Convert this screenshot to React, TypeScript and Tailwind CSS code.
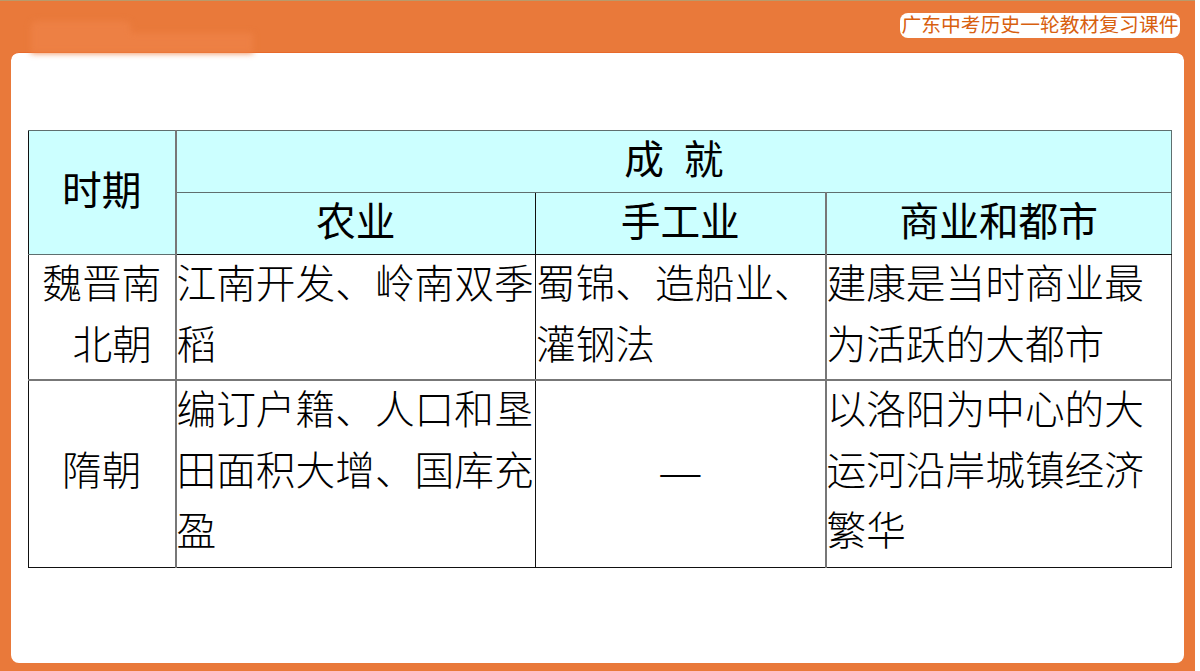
const font = { fontFamily: '"Liberation Serif", "Noto Sans CJK SC", serif' };

const headCell = "border border-[#5f6f6f] bg-[#ccffff] p-0 text-center align-middle text-[39.7px] font-normal text-black";
const bodyCell = "border border-y-[#111] border-x-[#111] p-0 align-middle text-[39.7px] leading-[60.5px] font-light text-black";

// the reference draws every other column rule thicker and greyer
const grayRule = "border-r-2 border-r-[#777]";
const blackRule = "border-r border-r-[#111]";
const midRow = " pb-[3px] border-b-2 border-b-[#777] ";
const lastRow = " pb-[4px] ";

export default function App() {
  return (
    <div className="h-[671px] w-[1200px] bg-white" style={font}>
      <div className="flex h-[671px] w-[1195px] flex-col border-t border-t-[#b99a6b] bg-[#e9793a] pb-2 pl-[11px] pr-[11px]">
        {/* Title bar */}
        <div className="flex h-[51px] shrink-0 items-center justify-between">
          <div className="ml-5 mt-5 flex h-8 w-[222px] flex-col blur-[3px]">
            <div className="h-3 w-[100px] rounded-t-md bg-[#ed8044]" />
            <div className="h-5 w-full bg-[#ed8044]" />
          </div>
          <div className="mb-[2px] mr-[4px] flex h-[25px] w-[280px] items-center justify-center rounded-lg bg-white text-[19.8px] leading-none whitespace-nowrap text-[#d8600f]">
            广东中考历史一轮教材复习课件
          </div>
        </div>

        {/* Card */}
        <div className="flex-1 rounded-lg border-t border-t-[#e8692a] bg-white pl-[17px] pt-[77px]">
          <table className="w-[1143px] table-fixed border-collapse">
            <colgroup>
              <col className="w-[147px]" />
              <col className="w-[360px]" />
              <col className="w-[290px]" />
              <col className="w-[346px]" />
            </colgroup>
            <tbody>
              <tr className="h-[62px]">
                <td rowSpan={2} className={headCell + " border-l-[#111] " + grayRule}>时期</td>
                <td colSpan={3} className={headCell}>成&nbsp;&nbsp;就</td>
              </tr>
              <tr className="h-[62px]">
                <td className={headCell + " border-b-[#111] " + blackRule}>农业</td>
                <td className={headCell + " border-b-[#111] " + grayRule}>手工业</td>
                <td className={headCell + " border-b-[#111]"}>商业和都市</td>
              </tr>
              <tr className="h-[125px]">
                <td className={bodyCell + midRow + "text-center " + grayRule}>
                  魏晋南
                  <br />
                  <span className="pl-[21px]">北朝</span>
                </td>
                <td className={bodyCell + midRow + blackRule}>江南开发、岭南双季稻</td>
                <td className={bodyCell + midRow + grayRule}>蜀锦、造船业、灌钢法</td>
                <td className={bodyCell + midRow + "border-r-[#555] pr-6"}>建康是当时商业最为活跃的大都市</td>
              </tr>
              <tr className="h-[186px]">
                <td className={bodyCell + lastRow + "text-center " + grayRule}>隋朝</td>
                <td className={bodyCell + lastRow + blackRule}>编订户籍、人口和垦田面积大增、国库充盈</td>
                <td className={bodyCell + lastRow + "text-center " + grayRule}>—</td>
                <td className={bodyCell + lastRow + "border-r-[#555] pr-6"}>以洛阳为中心的大运河沿岸城镇经济繁华</td>
              </tr>
            </tbody>
          </table>
        </div>
      </div>
    </div>
  );
}
